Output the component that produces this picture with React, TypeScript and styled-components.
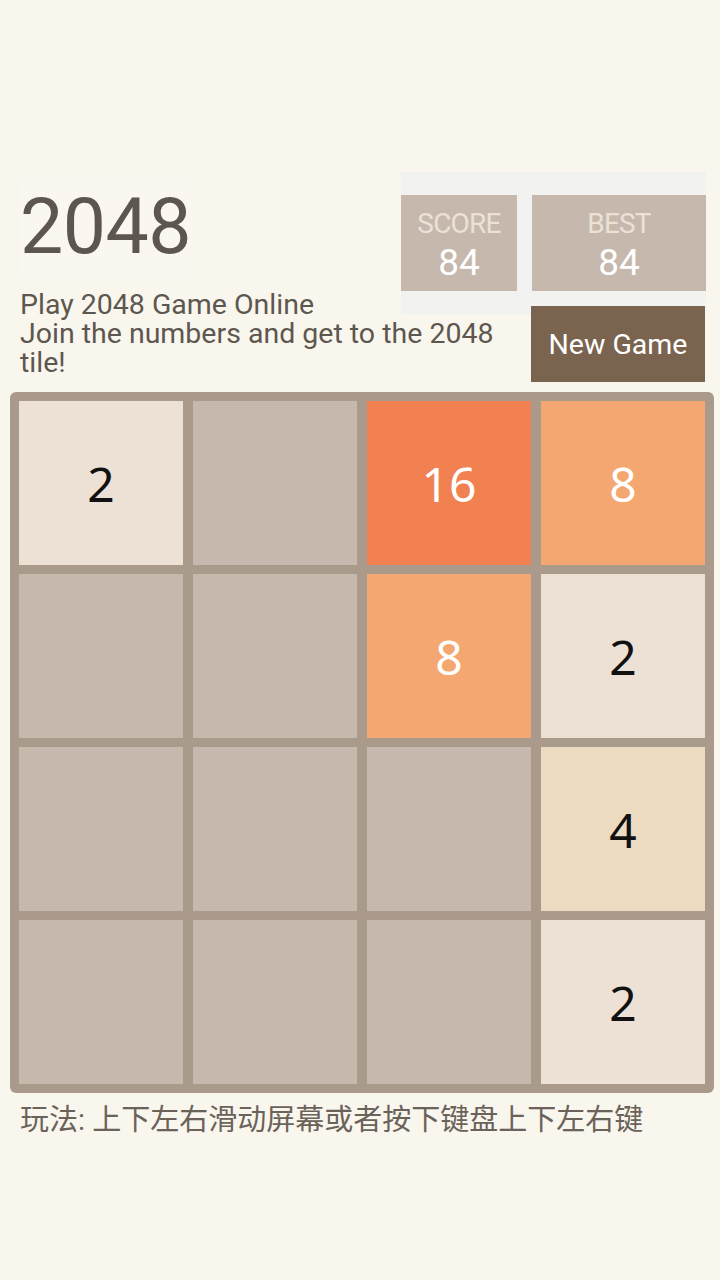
import React from 'react';
import styled, { createGlobalStyle } from 'styled-components';

const GlobalStyle = createGlobalStyle`
  html, body {
    margin: 0;
    padding: 0;
    background: #f9f6ee;
  }
  body {
    font-family: Roboto, "Noto Sans", "Noto Sans CJK SC", sans-serif;
    color: #5e5750;
  }
`;

const board: number[][] = [
  [2, 0, 16, 8],
  [0, 0, 8, 2],
  [0, 0, 0, 4],
  [0, 0, 0, 2],
];

const tileColors: Record<number, { bg: string; fg: string }> = {
  0: { bg: '#c6b8ac', fg: 'transparent' },
  2: { bg: '#ede0d4', fg: '#111111' },
  4: { bg: '#eddbc1', fg: '#111111' },
  8: { bg: '#f4a770', fg: '#ffffff' },
  16: { bg: '#f18150', fg: '#ffffff' },
};

function App() {
  return (
    <Page>
      <GlobalStyle />
      <TopRow>
        <Title>2048</Title>
        <ScorePanel>
          <ScoreBox width={116}>
            <ScoreLabel>SCORE</ScoreLabel>
            <ScoreValue>84</ScoreValue>
          </ScoreBox>
          <ScoreBox width={174}>
            <ScoreLabel>BEST</ScoreLabel>
            <ScoreValue>84</ScoreValue>
          </ScoreBox>
        </ScorePanel>
      </TopRow>
      <IntroRow>
        <Subtitle>
          Play 2048 Game Online
          <br />
          Join the numbers and get to the 2048 tile!
        </Subtitle>
        <NewGameButton>New Game</NewGameButton>
      </IntroRow>
      <Board>
        {board.flat().map((value, i) => (
          <Tile key={i} value={value}>
            {value > 0 ? value : ''}
          </Tile>
        ))}
      </Board>
      <HowTo>玩法: 上下左右滑动屏幕或者按下键盘上下左右键</HowTo>
    </Page>
  );
}

const Page = styled.div`
  width: 720px;
  min-height: 1280px;
  padding-top: 172px;
  box-sizing: border-box;
`;

const TopRow = styled.div`
  display: flex;
  justify-content: space-between;
  align-items: flex-start;
  padding: 0 14px 0 20px;
`;

const Title = styled.h1`
  margin: 8px 0 0;
  width: 172px;
  height: 95px;
  background: #faf7f0;
  font-size: 77px;
  font-weight: 400;
  line-height: 95px;
  color: #5d5650;
  letter-spacing: -0.5px;
`;

const ScorePanel = styled.div`
  display: flex;
  gap: 15px;
  width: 305px;
  height: 143px;
  box-sizing: border-box;
  padding-top: 23px;
  background: #f2f2f1;
`;

const ScoreBox = styled.div<{ width: number }>`
  width: ${(p) => p.width}px;
  height: 96px;
  background: #c6b8ac;
  display: flex;
  flex-direction: column;
  align-items: center;
  padding-top: 14px;
  box-sizing: border-box;
`;

const ScoreLabel = styled.span`
  font-size: 28px;
  line-height: 30px;
  color: #ece1d6;
  letter-spacing: -0.8px;
`;

const ScoreValue = styled.span`
  margin-top: 3px;
  font-size: 37px;
  line-height: 42px;
  color: #ffffff;
`;

const IntroRow = styled.div`
  display: flex;
  justify-content: space-between;
  align-items: flex-start;
  margin-top: -25px;
  padding: 0 15px 0 20px;
`;

const Subtitle = styled.p`
  margin: 0;
  width: 500px;
  font-size: 28.5px;
  line-height: 29px;
  color: #5e5750;
`;

const NewGameButton = styled.button`
  position: relative;
  margin-top: 16px;
  width: 174px;
  height: 76px;
  border: none;
  background: #7a6450;
  color: #ffffff;
  font-family: Roboto, sans-serif;
  font-size: 28.5px;
  padding: 0;
`;

const Board = styled.div`
  margin: 10px 0 0 10px;
  width: 704px;
  box-sizing: border-box;
  padding: 9px;
  display: grid;
  grid-template-columns: repeat(4, 164px);
  grid-auto-rows: 164px;
  column-gap: 10px;
  row-gap: 9px;
  background: #a99a8c;
  border-radius: 6px;
`;

const Tile = styled.div<{ value: number }>`
  display: flex;
  align-items: center;
  justify-content: center;
  background: ${(p) => tileColors[p.value].bg};
  color: ${(p) => tileColors[p.value].fg};
  font-family: "Noto Sans", "Open Sans", sans-serif;
  font-size: 48px;
`;

const HowTo = styled.p`
  margin: 9px 0 0;
  padding-left: 20px;
  font-family: Roboto, "Noto Sans CJK SC", sans-serif;
  font-size: 29px;
  line-height: 36px;
  color: #6b625a;
`;

export default App;
